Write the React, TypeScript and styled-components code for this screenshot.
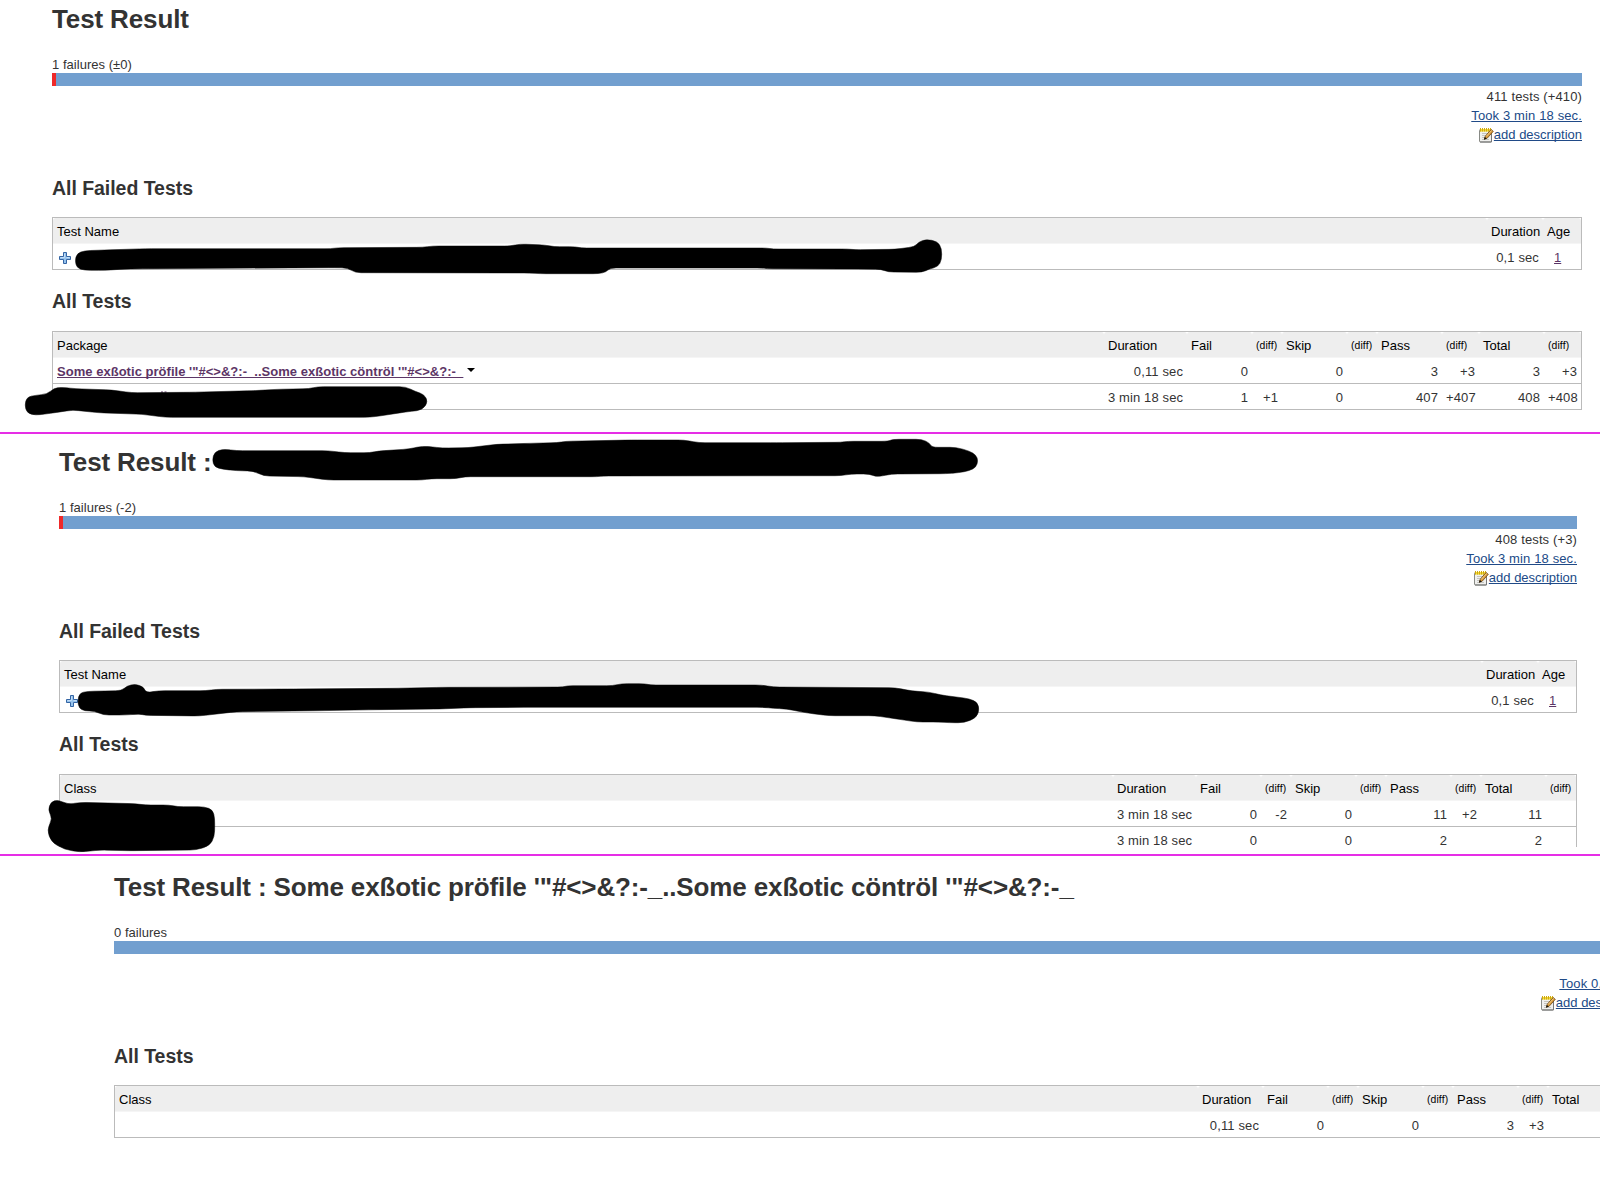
import React from "react";
import styled, { createGlobalStyle } from "styled-components";

const GlobalStyle = createGlobalStyle`
  html, body { margin: 0; padding: 0; background: #fff; }
  body {
    font-family: "Liberation Sans", Arial, Helvetica, sans-serif;
    font-size: 13px;
    color: #333;
    overflow: hidden;
  }
`;

const Page = styled.div`
  position: relative;
  width: 1600px;
  height: 1200px;
  overflow: hidden;
  background: #fff;
`;

const Slot = styled.div<{ $height: number }>`
  height: ${(p) => p.$height}px;
  overflow: hidden;
`;

const Divider = styled.div<{ $gap?: number }>`
  height: 2px;
  margin-top: ${(p) => p.$gap ?? 0}px;
  background: #e62ee6;
`;

const Panel = styled.section<{ $left: number; $width: number; $top: number }>`
  width: ${(p) => p.$width}px;
  margin-left: ${(p) => p.$left}px;
  padding-top: ${(p) => p.$top}px;
`;

const Title = styled.h1`
  margin: 0 0 22px;
  font-size: 26px;
  line-height: 30px;
  font-weight: bold;
  letter-spacing: -0.13px;
  white-space: pre;
`;

const Failures = styled.div`
  line-height: 17px;
  letter-spacing: 0.03px;
`;

const Bar = styled.div`
  display: flex;
  height: 13px;
  background: #729fcf;
`;

const BarFailed = styled.div`
  width: 4px;
  background: #ef2929;
`;

const Summary = styled.div`
  display: flex;
  flex-direction: column;
  align-items: flex-end;
  margin-top: 1px;
  height: 57px;
`;

const SummaryLine = styled.div<{ $loose?: boolean }>`
  display: flex;
  align-items: flex-start;
  height: 19px;
  line-height: 19px;
  letter-spacing: ${(p) => (p.$loose ? "0.13px" : "0")};
  white-space: pre;
`;

const Link = styled.a<{ $visited?: boolean; $bold?: boolean }>`
  color: ${(p) => (p.$visited ? "#5c3566" : "#204a87")};
  font-weight: ${(p) => (p.$bold ? "bold" : "normal")};
  letter-spacing: ${(p) => (p.$bold ? "0.03px" : "inherit")};
  text-decoration: underline;
  text-decoration-thickness: 1px;
  text-decoration-skip-ink: none;
  text-underline-offset: 1px;
`;

const Heading = styled.h2<{ $before: number; $after: number }>`
  margin: ${(p) => p.$before}px 0 ${(p) => p.$after}px;
  font-size: 19.5px;
  line-height: 24px;
  font-weight: bold;
  letter-spacing: -0.04px;
`;

const Grid = styled.table`
  width: 100%;
  table-layout: fixed;
  border: 1px solid #bbb;
  border-collapse: separate;
  border-spacing: 0;
`;

const Col = styled.col<{ $w?: number }>`
  width: ${(p) => (p.$w ? `${p.$w}px` : "auto")};
`;

const Th = styled.th<{ $small?: boolean }>`
  box-sizing: border-box;
  height: 26px;
  padding: 6px 0 4px 4px;
  border-bottom: 1px solid #f5f5f5;
  border-radius: 3px 3px 0 0;
  background: #eee;
  color: #000;
  font-weight: normal;
  font-size: ${(p) => (p.$small ? "10.4px" : "13px")};
  letter-spacing: ${(p) => (p.$small ? "0.1px" : "0")};
  line-height: 15px;
  text-align: left;
  vertical-align: top;
  white-space: nowrap;
`;

const Td = styled.td<{ $align?: "left" | "right"; $indent?: number; $last?: boolean }>`
  box-sizing: border-box;
  height: ${(p) => (p.$last ? 25 : 26)}px;
  padding: 6px 4px 0 ${(p) => p.$indent ?? 4}px;
  border-bottom: ${(p) => (p.$last ? "none" : "1px solid #bbb")};
  line-height: 15px;
  letter-spacing: ${(p) => (p.$align === "right" ? "0.12px" : "0")};
  text-align: ${(p) => p.$align ?? "left"};
  vertical-align: top;
  white-space: pre;
`;

const NameLine = styled.div`
  display: flex;
  height: 15px;
`;

const Caret = styled.span`
  width: 0;
  height: 0;
  margin: 4px 0 0 4px;
  border: 4px solid transparent;
  border-top-color: #000;
  border-bottom-width: 0;
`;

const PlusSvg = styled.svg`
  display: block;
  margin: 2px 0 0 2px;
`;

const NoteSvg = styled.svg`
  display: block;
  margin-top: 2px;
`;

const Markings = styled.svg`
  position: absolute;
  left: 0;
  top: 0;
  pointer-events: none;
`;

function PlusIcon() {
  return (
    <PlusSvg width="12" height="12" viewBox="0 0 12 12">
      <path
        d="M4.5 .5h3v4h4v3h-4v4h-3v-4h-4v-3h4z"
        fill="#94c1ec"
        stroke="#3465a4"
        strokeLinejoin="round"
      />
      <path d="M5.5 1.5v4h-4M10.5 5.5h-3" fill="none" stroke="#c3ddf5" />
    </PlusSvg>
  );
}

function NoteIcon() {
  return (
    <NoteSvg width="16" height="16" viewBox="0 0 16 16">
      <rect x="1.5" y="2.5" width="12" height="12.500" rx="1" fill="#f0f0ee" stroke="#888a85" />
      <path d="M2 15h11.5V3.500" fill="none" stroke="#777" />
      <rect x="2" y="2" width="11" height="2.6" fill="#f2dc3a" />
      <path d="M2.5 1v3.500M4.5 1v3.500M6.5 1v3.500M8.500 1v3.500M10.5 1v3.500M12.500 1v3.500" stroke="#d0a810" />
      <path d="M4 6.5h6M4 8.500h4M4 10.5h3M4 12.5h7" stroke="#c4c4c0" />
      <path d="M6.3 12.2l1-3L13 2.6l2.3 1.7-6 6.8z" fill="#d99a3c" stroke="#6b4410" strokeWidth=".8" />
      <path d="M8.3 9.4l5.4-6.1" stroke="#f6d08a" strokeWidth=".9" />
      <path d="M6 12.8l.8-2.8 2 1.5z" fill="#111" />
    </NoteSvg>
  );
}

type Cells = string[];

function Stats({
  first,
  widths,
  rows,
}: {
  first: string;
  widths: number[];
  rows: { name?: React.ReactNode; cells: Cells }[];
}) {
  const heads = ["Duration", "Fail", "(diff)", "Skip", "(diff)", "Pass", "(diff)", "Total", "(diff)"];
  return (
    <Grid>
      <colgroup>
        <Col />
        {widths.map((w, i) => (
          <Col key={i} $w={w} />
        ))}
      </colgroup>
      <thead>
        <tr>
          <Th>{first}</Th>
          {heads.map((h, i) => (
            <Th key={i} $small={h === "(diff)"}>
              {h}
            </Th>
          ))}
        </tr>
      </thead>
      <tbody>
        {rows.map((row, r) => (
          <tr key={r}>
            <Td $last={r === rows.length - 1}>{row.name}</Td>
            {row.cells.map((c, i) => (
              <Td key={i} $align="right" $last={r === rows.length - 1}>
                {c}
              </Td>
            ))}
          </tr>
        ))}
      </tbody>
    </Grid>
  );
}

function FailedTests() {
  return (
    <Grid>
      <colgroup>
        <Col />
        <Col $w={56} />
        <Col $w={38} />
      </colgroup>
      <thead>
        <tr>
          <Th>Test Name</Th>
          <Th>Duration</Th>
          <Th>Age</Th>
        </tr>
      </thead>
      <tbody>
        <tr>
          <Td $last>
            <NameLine>
              <PlusIcon />
            </NameLine>
          </Td>
          <Td $align="right" $last>
            0,1 sec
          </Td>
          <Td $indent={11} $last>
            <Link $visited>1</Link>
          </Td>
        </tr>
      </tbody>
    </Grid>
  );
}

function Overview({
  title,
  failures,
  failed,
  tests,
  took,
}: {
  title: string;
  failures: string;
  failed?: boolean;
  tests: string;
  took: string;
}) {
  return (
    <>
      <Title>{title}</Title>
      <Failures>{failures}</Failures>
      <Bar>{failed && <BarFailed />}</Bar>
      <Summary>
        <SummaryLine $loose>{tests}</SummaryLine>
        <SummaryLine $loose>
          <Link>{took}</Link>
        </SummaryLine>
        <SummaryLine>
          <NoteIcon />
          <Link>add description</Link>
        </SummaryLine>
      </Summary>
    </>
  );
}

const EXOTIC = "Some exßotic pröfile '\"#<>&?:-_..Some exßotic cöntröl '\"#<>&?:-_";

/* Outlines of the marker strokes that hide names, as x,y pairs. */
const STROKES: number[][] = [
  [75,260.7,77,253.5,84.5,250.7,104.8,250,145.3,248.7,331,248.7,338,247.7,422.5,247.3,432.7,246,510.4,246,520,244,545,245,553.7,246.7,575.6,246.7,580.7,248,766.6,248,773,249,847.7,249,854.5,249.7,895,249.3,914.7,246.7,918.7,242,926,239.3,937.3,241.3,941.7,248.3,941.7,260,938,266.7,929.5,269,922,272.3,888,272,881.5,269.3,851,269,766.6,268.7,763,268,610,268,606,272,599,273.7,540,273.7,530,273,355,272.7,348,268,334.6,267.7,148.7,268.7,125,269,104.8,270.3,84.5,270.3,77,268],
  [24.7,405,27,397,35.5,395.3,47.3,394,54,388.3,60.8,387.3,76,388.7,111.5,390,131.8,392.7,189.3,392.3,253.5,390.7,277,389.3,309,388.7,317.7,386.7,405.6,386.7,415.8,391.7,424,394.3,428,401.7,422.5,410,405.6,412,375,416.7,365,417.3,165.6,417.3,142,414.3,98,412.7,72.7,410,50.7,413.3,35.5,415.3,27,413],
  [212.3,460,214.5,452,223,449,236.6,450.7,328,450.7,344.8,452.7,370,452.7,378.6,451,409,449,422.5,446,442.8,448,468,447.7,496.9,444.3,530,443.3,557,442.7,565.5,441.3,631.4,440,683.8,440,699,442.7,776.7,442.7,841,442.3,847.7,441.3,888,441.3,893,439.3,922,439.3,929.5,443,932,447.3,956,447.3,969.4,451,976,455,978,460.7,976,467.3,969.4,470.7,959,472.7,945.7,473.7,891.7,474,876.5,477,869.7,474,851,474,841,475.7,602.7,476,597.6,476.7,464.8,476.7,456,478.7,431,478.7,422.5,480,327.9,480,304,476.7,263.6,476,253.5,471,236.6,470.7,223,469.3,214.5,467],
  [77.7,701,79.5,693,87.9,691.3,121.7,690.7,126.8,686,135.2,684,143.7,687,146,692.7,158.9,690.7,206,690.7,216.3,689.3,287.3,689,392,688.3,442.8,687.3,563.8,687,567,685.7,612.8,685.7,621.3,683.7,645,683.7,650,685,761.5,685,773.4,687,895,687.7,912,691,928.9,692,940.7,695,969.4,698.7,977.5,702.5,979.3,710,976,718,964.3,722.7,949,722.7,939,722,917,722,895,718.7,874.8,715.7,829,715.7,807,713,786.9,709,773.4,708.3,763,707.3,530,707.3,469.8,707.7,439.4,709,375,709.7,319,710.7,236.6,711.7,199.4,716,145.3,715.3,140,714,125,715,103,715,94.6,711,84.5,711,79,708],
  [48,810,51,802,58,799.7,67.6,804.3,81,802.3,135,803.7,145,805,169,805,177.5,806.7,204.5,806.7,212.8,810,214.8,818.3,214.5,836.7,209.6,845.7,196,850,128,850.7,101,850,79.4,852,64.2,849.3,51.5,842,47,830,52.4,818.3],
];

/* Rounds each corner of the outline, by at most 6px along either edge. */
function roundedOutline(flat: number[]): string {
  const pts: [number, number][] = [];
  for (let i = 0; i < flat.length; i += 2) pts.push([flat[i], flat[i + 1]]);
  const n = pts.length;
  const toward = (a: [number, number], b: [number, number]) => {
    const len = Math.hypot(b[0] - a[0], b[1] - a[1]);
    const t = Math.min(0.5, 6 / len);
    return `${(a[0] + (b[0] - a[0]) * t).toFixed(2)} ${(a[1] + (b[1] - a[1]) * t).toFixed(2)}`;
  };
  return (
    pts
      .map((p, i) => {
        const prev = pts[(i + n - 1) % n];
        const next = pts[(i + 1) % n];
        return `${i === 0 ? "M" : "L"}${toward(p, prev)}Q${p[0]} ${p[1]} ${toward(p, next)}`;
      })
      .join("") + "Z"
  );
}

export default function App() {
  return (
    <Page>
      <GlobalStyle />
      <Slot $height={432}>
        <Panel $left={52} $width={1530} $top={4}>
          <Overview
            title="Test Result"
            failures="1 failures (±0)"
            failed
            tests="411 tests (+410)"
            took="Took 3 min 18 sec."
          />
          <Heading $before={32} $after={17}>All Failed Tests</Heading>
          <FailedTests />
          <Heading $before={19} $after={18}>All Tests</Heading>
          <Stats
            first="Package"
            widths={[83, 65, 30, 65, 30, 65, 37, 65, 37]}
            rows={[
              {
                name: (
                  <NameLine>
                    <Link $visited $bold>{EXOTIC}</Link>
                    <Caret />
                  </NameLine>
                ),
                cells: ["0,11 sec", "0", "", "0", "", "3", "+3", "3", "+3"],
              },
              { cells: ["3 min 18 sec", "1", "+1", "0", "", "407", "+407", "408", "+408"] },
            ]}
          />
        </Panel>
      </Slot>
      <Divider />
      <Slot $height={413}>
        <Panel $left={59} $width={1518} $top={13}>
          <Overview
            title="Test Result :"
            failures="1 failures (-2)"
            failed
            tests="408 tests (+3)"
            took="Took 3 min 18 sec."
          />
          <Heading $before={32} $after={17}>All Failed Tests</Heading>
          <FailedTests />
          <Heading $before={19} $after={18}>All Tests</Heading>
          <Stats
            first="Class"
            widths={[83, 65, 30, 65, 30, 65, 30, 65, 30]}
            rows={[
              { cells: ["3 min 18 sec", "0", "-2", "0", "", "11", "+2", "11", ""] },
              { cells: ["3 min 18 sec", "0", "", "0", "", "2", "", "2", ""] },
            ]}
          />
        </Panel>
      </Slot>
      <Divider $gap={7} />
      <Panel $left={114} $width={1530} $top={16}>
        <Overview title={`Test Result : ${EXOTIC}`} failures="0 failures" tests="" took="Took 0,11 sec." />
        <Heading $before={32} $after={17}>All Tests</Heading>
        <Stats
          first="Class"
          widths={[65, 65, 30, 65, 30, 65, 30, 65, 30]}
          rows={[{ cells: ["0,11 sec", "0", "", "0", "", "3", "+3", "3", "+3"] }]}
        />
      </Panel>
      <Markings width="1600" height="1200" viewBox="0 0 1600 1200">
        <path d="M161 392h2M164.500 392h2" stroke="#5c3566" />
        {STROKES.map((s, i) => (
          <path key={i} d={roundedOutline(s)} fill="#000" stroke="#000" strokeWidth=".5" />
        ))}
      </Markings>
    </Page>
  );
}
